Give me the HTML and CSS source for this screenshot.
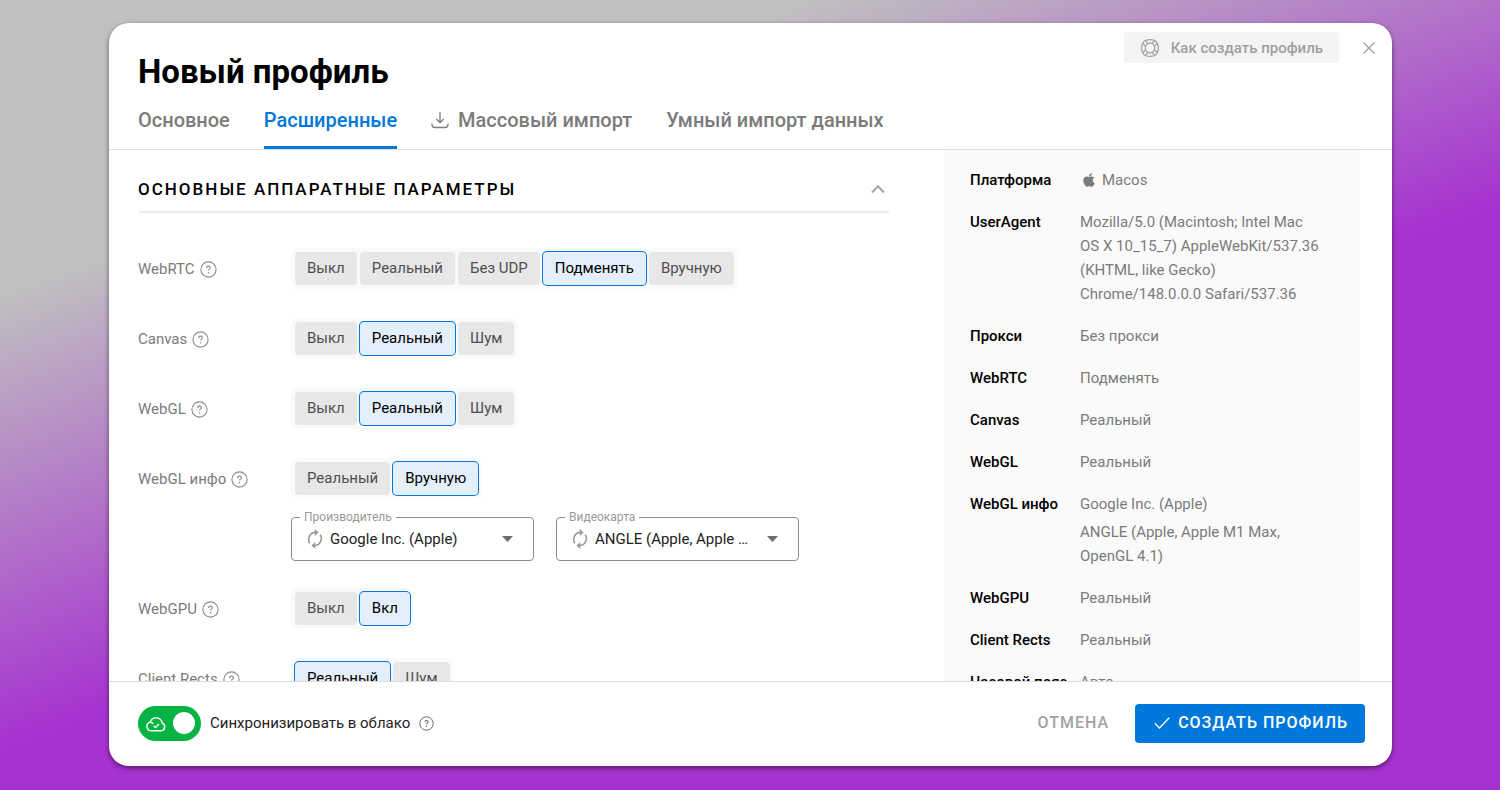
FILE: index.html
```html
<!DOCTYPE html>
<html lang="ru">
<head>
<meta charset="utf-8">
<meta name="viewport" content="width=device-width, initial-scale=1">
<title>Новый профиль</title>
<link rel="stylesheet" href="styles.css">
</head>
<body>
<svg class="sprite" aria-hidden="true">
  <symbol id="help" viewBox="0 0 17 17"><circle cx="8.5" cy="8.5" r="7.6" fill="none" stroke="currentColor" stroke-width="1.1"/><path d="M6.7 7c0-1.1.8-1.8 1.8-1.8s1.8.7 1.8 1.7c0 1.2-1.8 1.3-1.8 2.7" fill="none" stroke="currentColor" stroke-width="1.2"/><circle cx="8.5" cy="11.7" r=".8" fill="currentColor"/></symbol>
  <symbol id="cycle" viewBox="0 0 16 20"><g fill="none" stroke="currentColor" stroke-width="1.6"><path d="M2.8 14.2A7 7 0 0 1 8.6 3.4"/><path d="M13.2 5.8A7 7 0 0 1 7.4 16.6"/></g><path d="M7.8 0l3.8 3.5-3.8 3.5zM8.2 20l-3.8-3.5 3.8-3.5z" fill="currentColor"/></symbol>
</svg>

<main class="dialog">
  <header class="header">
    <div class="header-top">
      <h1 class="title">Новый профиль</h1>
      <div class="header-actions">
        <button class="help-button" type="button">
          <svg width="20" height="20" viewBox="-10 -10 20 20" fill="none" stroke="currentColor" stroke-width="1.2"><path d="M0-8.4C5.800-8.400 8.400-5.800 8.400 0S5.800 8.400 0 8.400-8.400 5.800-8.400 0-5.800-8.400 0-8.400z"/><circle r="4.800"/><path transform="rotate(45)" d="M4.500-1.800h4.400M4.500 1.800h4.400M-4.500-1.800h-4.400M-4.500 1.800h-4.400M-1.800 4.500v4.400M1.800 4.500v4.400M-1.800-4.500v-4.400M1.800-4.500v-4.400"/></svg>
          Как создать профиль
        </button>
        <button class="close" type="button" aria-label="Закрыть"><svg width="14" height="14" viewBox="0 0 14 14" stroke="currentColor" stroke-width="1.2"><path d="M1.500 1.500l11 11M12.500 1.500l-11 11"/></svg></button>
      </div>
    </div>
    <nav class="tabs">
      <a class="tab" href="#main">Основное</a>
      <a class="tab tab-active" href="#advanced" aria-current="page">Расширенные</a>
      <a class="tab" href="#mass"><svg width="18" height="18" viewBox="0 0 18 18" fill="none" stroke="currentColor" stroke-width="1.3"><path d="M9 1v10.500M5.400 8L9 11.600 12.600 8M1 12.500v1a3 3 0 0 0 3 3h10a3 3 0 0 0 3-3v-1"/></svg>Массовый импорт</a>
      <a class="tab" href="#smart">Умный импорт данных</a>
    </nav>
  </header>

  <div class="content">
    <form class="form">
      <h2 class="section-title">
        Основные аппаратные параметры
        <button class="collapse" type="button" aria-label="Свернуть"><svg width="14" height="10" viewBox="0 0 14 10" fill="none" stroke="currentColor" stroke-width="2"><path d="M1 8.500l6-6.300 6 6.300"/></svg></button>
      </h2>

      <div class="row">
        <div class="label">WebRTC <svg class="hint"><use href="#help"/></svg></div>
        <div class="group"><button class="option" type="button">Выкл</button><button class="option" type="button">Реальный</button><button class="option" type="button">Без UDP</button><button class="option option-on" type="button" aria-pressed="true">Подменять</button><button class="option" type="button">Вручную</button></div>
      </div>
      <div class="row">
        <div class="label">Canvas <svg class="hint"><use href="#help"/></svg></div>
        <div class="group"><button class="option" type="button">Выкл</button><button class="option option-on" type="button" aria-pressed="true">Реальный</button><button class="option" type="button">Шум</button></div>
      </div>
      <div class="row">
        <div class="label">WebGL <svg class="hint"><use href="#help"/></svg></div>
        <div class="group"><button class="option" type="button">Выкл</button><button class="option option-on" type="button" aria-pressed="true">Реальный</button><button class="option" type="button">Шум</button></div>
      </div>
      <div class="row row-fields">
        <div class="label">WebGL инфо <svg class="hint"><use href="#help"/></svg></div>
        <div class="controls">
          <div class="group"><button class="option" type="button">Реальный</button><button class="option option-on" type="button" aria-pressed="true">Вручную</button></div>
          <div class="fields">
            <fieldset class="field">
              <legend class="legend"><label for="vendor">Производитель</label></legend>
              <div class="field-body">
                <button class="cycle" type="button" aria-label="Обновить"><svg width="16" height="20"><use href="#cycle"/></svg></button>
                <select class="select" id="vendor"><option>Google Inc. (Apple)</option></select>
                <svg class="arrow" width="11" height="6" viewBox="0 0 11 6"><path d="M0 0h11L5.500 6z" fill="currentColor"/></svg>
              </div>
            </fieldset>
            <fieldset class="field">
              <legend class="legend"><label for="gpu">Видеокарта</label></legend>
              <div class="field-body">
                <button class="cycle" type="button" aria-label="Обновить"><svg width="16" height="20"><use href="#cycle"/></svg></button>
                <select class="select" id="gpu"><option>ANGLE (Apple, Apple M1 Max, OpenGL 4.1)</option></select>
                <svg class="arrow" width="11" height="6" viewBox="0 0 11 6"><path d="M0 0h11L5.500 6z" fill="currentColor"/></svg>
              </div>
            </fieldset>
          </div>
        </div>
      </div>
      <div class="row">
        <div class="label">WebGPU <svg class="hint"><use href="#help"/></svg></div>
        <div class="group"><button class="option" type="button">Выкл</button><button class="option option-on" type="button" aria-pressed="true">Вкл</button></div>
      </div>
      <div class="row">
        <div class="label">Client Rects <svg class="hint"><use href="#help"/></svg></div>
        <div class="group"><button class="option option-on" type="button" aria-pressed="true">Реальный</button><button class="option" type="button">Шум</button></div>
      </div>
    </form>

    <aside class="summary">
      <dl class="list">
        <dt>Платформа</dt>
        <dd class="platform"><svg width="12" height="14" viewBox="0 24 384 464" fill="currentColor"><path d="M318.700 268.700c-.2-36.700 16.400-64.400 50-84.800-18.800-26.900-47.200-41.700-84.700-44.600-35.500-2.800-74.300 20.700-88.500 20.700-15 0-49.400-19.700-76.400-19.700C63.300 141.200 4 184.800 4 273.500q0 39.300 14.400 81.200c12.800 36.700 59 126.700 107.200 125.200 25.200-.6 43-17.900 75.800-17.900 31.800 0 48.300 17.900 76.400 17.900 48.600-.7 90.400-82.500 102.600-119.300-65.200-30.700-61.700-90-61.700-91.900zm-56.600-164.200c27.300-32.400 24.800-61.900 24-72.500-24.100 1.400-52 16.400-67.900 34.900-17.500 19.800-27.800 44.300-25.600 71.900 26.100 2 49.900-11.400 69.500-34.300z"/></svg>Macos</dd>
        <dt>UserAgent</dt>
        <dd>Mozilla/5.0 (Macintosh; Intel Mac OS X 10_15_7) AppleWebKit/537.36 (KHTML, like Gecko) Chrome/148.0.0.0 Safari/537.36</dd>
        <dt>Прокси</dt><dd>Без прокси</dd>
        <dt>WebRTC</dt><dd>Подменять</dd>
        <dt>Canvas</dt><dd>Реальный</dd>
        <dt>WebGL</dt><dd>Реальный</dd>
        <dt>WebGL инфо</dt><dd><p class="line">Google Inc. (Apple)</p><p class="line">ANGLE (Apple, Apple M1 Max, OpenGL 4.1)</p></dd>
        <dt>WebGPU</dt><dd>Реальный</dd>
        <dt>Client Rects</dt><dd>Реальный</dd>
        <dt>Часовой пояс</dt><dd>Авто</dd>
      </dl>
    </aside>
  </div>

  <footer class="footer">
    <label class="sync">
      <span class="switch">
        <input class="switch-input" type="checkbox" role="switch" checked>
        <svg class="cloud" width="20" height="16" viewBox="0 0 20 16" fill="none" stroke="currentColor" stroke-width="1.4"><path d="M5.200 14.800h9.600a4 4 0 0 0 1.400-7.700A6.300 6.300 0 0 0 4 6.200a4.400 4.400 0 0 0 1.200 8.600zM4 6.200c1.400 0 2.600.6 3.300 1.600"/><path d="M7.700 9.700l1.800 1.700L13 7.900"/></svg>
      </span>
      Синхронизировать в облако
      <svg class="hint hint-small"><use href="#help"/></svg>
    </label>
    <div class="footer-actions">
      <button class="cancel" type="button">Отмена</button>
      <button class="create" type="button"><svg width="16" height="12" viewBox="0 0 16 12" fill="none" stroke="currentColor" stroke-width="1.3"><path d="M.8 6.300l4.700 4.700L15.200.8"/></svg>Создать профиль</button>
    </div>
  </footer>
</main>
</body>
</html>
```
FILE: styles.css
```css
* { box-sizing: border-box; }

body {
  margin: 0;
  height: 100vh;
  padding: 23px 108px 24px 109px;
  background: linear-gradient(160deg, #c0c0c0 22%, #a632d0 56%);
  font-family: Roboto, "Liberation Sans", sans-serif;
  font-size: 15px;
  line-height: 24px;
  color: #7b7b7b;
}

button, select {
  font: inherit;
  color: inherit;
  border: 0;
  padding: 0;
  background: none;
  cursor: pointer;
}

svg { display: block; flex: none; }
.sprite { position: absolute; width: 0; height: 0; }

.dialog {
  height: 100%;
  display: flex;
  flex-direction: column;
  overflow: hidden;
  background: #fff;
  border-radius: 20px;
  box-shadow: 0 2px 5px rgba(0, 0, 0, 0.5);
}

.header { border-bottom: 1px solid #e0e0e0; padding: 9px 16px 0 29px; }
.header-top { display: flex; justify-content: space-between; align-items: flex-start; }
.title { margin: 20px 0 16px; font-size: 33px; line-height: 40px; font-weight: 700; color: #000; }
.header-actions { display: flex; align-items: center; gap: 23px; color: #9e9e9e; }
.help-button {
  display: flex;
  align-items: center;
  gap: 11px;
  height: 31px;
  padding: 0 16px;
  border-radius: 4px;
  background: #f4f4f4;
  color: #a0a0a0;
  font-weight: 500;
}

.tabs { display: flex; gap: 34px; }
.tab {
  display: flex;
  align-items: center;
  gap: 9px;
  padding-bottom: 14px;
  border-bottom: 3px solid transparent;
  font-size: 20px;
  font-weight: 500;
  color: #7b7b7b;
  text-decoration: none;
}
.tab-active { color: #0078db; border-color: #0078db; }

.content {
  flex: 1;
  min-height: 0;
  display: grid;
  grid-template-columns: minmax(0, 1fr) 416px;
  gap: 54px;
  padding: 0 32px 0 29px;
  overflow: hidden;
}

.section-title {
  display: flex;
  justify-content: space-between;
  align-items: center;
  margin: 0 0 35px;
  padding: 27px 5px 10px 0;
  border-bottom: 2px solid #ebebeb;
  border-radius: 4px;
  font-size: 17px;
  font-weight: 500;
  letter-spacing: 2px;
  text-transform: uppercase;
  color: #000;
}
.collapse { color: #a6a6a6; }

.row { display: grid; grid-template-columns: 153px minmax(0, 1fr); align-items: start; margin-bottom: 29px; }
.row-fields { margin-bottom: 27px; }
.label { display: flex; align-items: center; gap: 5px; padding-top: 9px; }
.hint { width: 17px; height: 17px; color: #8c8c8c; }
.hint-small { width: 15px; height: 15px; color: #666; }

.group {
  display: flex;
  gap: 3px;
  width: fit-content;
  padding: 4px;
  border-radius: 8px;
  background: #fafafa;
}
.option {
  height: 33px;
  padding: 0 12px 1px;
  border-radius: 4px;
  background: #e7e7e7;
  color: #505050;
}
.option-on { background: #e4effc; color: #000; box-shadow: 0 0 0 1px #0078db; }

.fields { display: flex; gap: 22px; margin-top: 12px; }
.field {
  width: 243px;
  min-width: 0;
  margin: 0;
  padding: 0 20px 0 15px;
  border: 1px solid #8e8e8e;
  border-radius: 4px;
}
.legend { margin-left: -7px; padding: 0 4px; font-size: 12px; line-height: 12px; color: #9a9a9a; }
.field-body { display: flex; align-items: center; padding: 4px 0 9px; }
.cycle { color: #9a9a9a; }
.select {
  flex: 1;
  min-width: 0;
  height: 24px;
  margin: 0 14px 0 7px;
  appearance: none;
  overflow: hidden;
  text-overflow: ellipsis;
  color: #222;
}
.arrow { color: #6e6e6e; pointer-events: none; }

.summary { padding: 18px 36px 0 26px; background: #fafafa; }
.list { display: grid; grid-template-columns: 110px minmax(0, 1fr); row-gap: 18px; margin: 0; }
.list dt { font-weight: 500; color: #000; white-space: nowrap; }
.list dd { margin: 0; }
.platform { display: flex; align-items: center; gap: 7px; padding-left: 3px; }
.line { margin: 0; }
.line + .line { margin-top: 4px; }

.footer {
  display: flex;
  justify-content: space-between;
  align-items: center;
  min-height: 85px;
  padding: 0 27px 2px 29px;
  border-top: 1px solid #dcdcdc;
}
.sync { display: flex; align-items: center; gap: 9px; color: #222; cursor: pointer; }
.switch { position: relative; }
.switch-input {
  appearance: none;
  display: flex;
  align-items: center;
  justify-content: flex-end;
  width: 63px;
  height: 35px;
  margin: 0;
  padding: 6px;
  border-radius: 18px;
  background: #05b343;
}
.switch-input::before { content: ""; width: 22px; height: 22px; border-radius: 50%; background: #fff; }
.cloud { position: absolute; left: 8px; top: 10px; color: #fff; pointer-events: none; }

.footer-actions { display: flex; align-items: center; gap: 26px; }
.cancel, .create { font-size: 16px; font-weight: 500; letter-spacing: 1px; text-transform: uppercase; }
.cancel { color: #a3a3a3; }
.create {
  display: flex;
  align-items: center;
  gap: 8px;
  height: 39px;
  padding: 0 17px 0 19px;
  border-radius: 4px;
  background: #0078db;
  color: #fff;
}
```
